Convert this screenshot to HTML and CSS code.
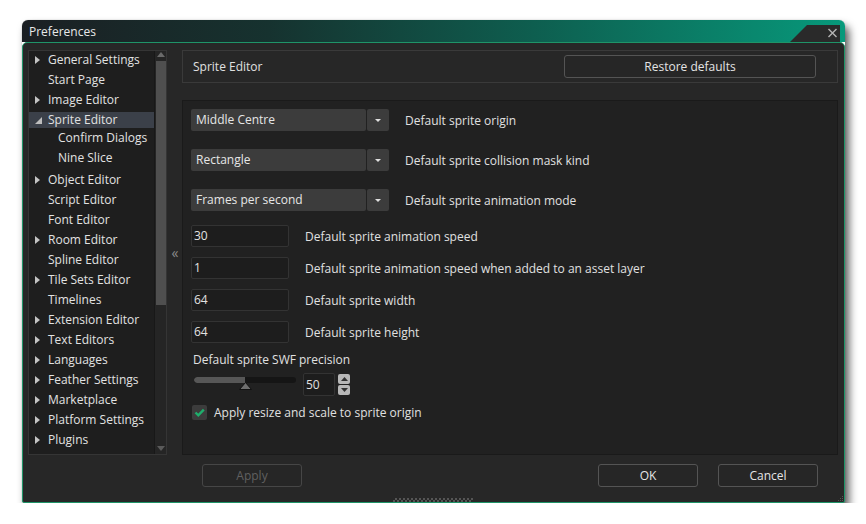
FILE: index.html
```html
<!DOCTYPE html>
<html>
<head>
<meta charset="utf-8">
<link rel="stylesheet" href="styles.css">
</head>
<body>
<div class="window">
  <div class="titlebar">
    <span class="title">Preferences</span>
    <svg class="close-tab" width="55" height="22" viewBox="0 0 55 22">
      <polygon points="0,22 17,5 50,5 50,22" fill="#2a2a2a"/>
      <path d="M38.5 9 L46.5 17 M46.5 9 L38.5 17" stroke="#b4b4b4" stroke-width="1.4" fill="none"/>
    </svg>
  </div>
  <div class="body">
    <div class="main">
      <div class="sidebar">
        <div class="tree">
          <div class="row"><span class="tri"></span>General Settings</div>
          <div class="row leaf">Start Page</div>
          <div class="row"><span class="tri"></span>Image Editor</div>
          <div class="row selected"><span class="tri-open"></span>Sprite Editor</div>
          <div class="row sub">Confirm Dialogs</div>
          <div class="row sub">Nine Slice</div>
          <div class="row after-sub"><span class="tri"></span>Object Editor</div>
          <div class="row leaf">Script Editor</div>
          <div class="row leaf">Font Editor</div>
          <div class="row"><span class="tri"></span>Room Editor</div>
          <div class="row leaf">Spline Editor</div>
          <div class="row"><span class="tri"></span>Tile Sets Editor</div>
          <div class="row leaf">Timelines</div>
          <div class="row"><span class="tri"></span>Extension Editor</div>
          <div class="row"><span class="tri"></span>Text Editors</div>
          <div class="row"><span class="tri"></span>Languages</div>
          <div class="row"><span class="tri"></span>Feather Settings</div>
          <div class="row"><span class="tri"></span>Marketplace</div>
          <div class="row"><span class="tri"></span>Platform Settings</div>
          <div class="row"><span class="tri"></span>Plugins</div>
          <div class="row"><span class="tri"></span>Runtime Feeds</div>
        </div>
        <div class="scrollbar">
          <span class="sb-up"></span>
          <div class="sb-thumb"></div>
          <span class="sb-down"></span>
        </div>
      </div>
      <div class="collapse">«</div>
      <div class="right">
        <div class="header">
          <span>Sprite Editor</span>
          <div class="btn restore">Restore defaults</div>
        </div>
        <div class="panel">
          <div class="drow">
            <div class="dropdown"><div class="dd-main">Middle Centre</div><div class="dd-arrow"><span></span></div></div>
            <span class="dlabel">Default sprite origin</span>
          </div>
          <div class="drow">
            <div class="dropdown"><div class="dd-main">Rectangle</div><div class="dd-arrow"><span></span></div></div>
            <span class="dlabel">Default sprite collision mask kind</span>
          </div>
          <div class="drow last">
            <div class="dropdown"><div class="dd-main">Frames per second</div><div class="dd-arrow"><span></span></div></div>
            <span class="dlabel">Default sprite animation mode</span>
          </div>
          <div class="irow"><div class="input">30</div><span class="ilabel">Default sprite animation speed</span></div>
          <div class="irow"><div class="input">1</div><span class="ilabel">Default sprite animation speed when added to an asset layer</span></div>
          <div class="irow"><div class="input">64</div><span class="ilabel">Default sprite width</span></div>
          <div class="irow"><div class="input">64</div><span class="ilabel">Default sprite height</span></div>
          <div class="swf-label">Default sprite SWF precision</div>
          <div class="slider-row">
            <div class="slider">
              <div class="track"><div class="fill"></div></div>
              <svg class="knob" width="13" height="8" viewBox="0 0 13 8"><polygon points="6.5,0.5 12.5,7.5 0.5,7.5" fill="#6e6e6e" stroke="#111" stroke-width="1"/></svg>
            </div>
            <div class="spin-input">50</div>
            <div class="spin-btns">
              <div class="spin-btn"><svg width="7" height="4" viewBox="0 0 7 4"><polygon points="3.5,0 7,4 0,4" fill="#333"/></svg></div>
              <div class="spin-btn"><svg width="7" height="4" viewBox="0 0 7 4"><polygon points="0,0 7,0 3.5,4" fill="#333"/></svg></div>
            </div>
          </div>
          <div class="check-row">
            <div class="checkbox"><svg width="15" height="15" viewBox="0 0 15 15"><path d="M3.5 7.5 L6.3 10.3 L11.8 4.6" stroke="#1fae6c" stroke-width="2.4" fill="none"/></svg></div>
            <span class="clabel">Apply resize and scale to sprite origin</span>
          </div>
        </div>
      </div>
    </div>
    <div class="footer">
      <div class="btn disabled">Apply</div>
      <div class="btn ok">OK</div>
      <div class="btn">Cancel</div>
    </div>
    <div class="grip"></div>
    <svg class="corner-grip" width="7" height="7" viewBox="0 0 7 7">
      <rect x="5" y="1" width="1" height="1" fill="#555"/>
      <rect x="3" y="3" width="1" height="1" fill="#555"/>
      <rect x="5" y="3" width="1" height="1" fill="#555"/>
      <rect x="1" y="5" width="1" height="1" fill="#555"/>
      <rect x="3" y="5" width="1" height="1" fill="#555"/>
      <rect x="5" y="5" width="1" height="1" fill="#555"/>
    </svg>
  </div>
</div>
</body>
</html>
```
FILE: styles.css
```css
* { box-sizing: border-box; }
html, body { margin: 0; padding: 0; }
body {
  background: #ffffff;
  font-family: "Open Sans", "DejaVu Sans", sans-serif;
  font-size: 12px;
  color: #e0e0e0;
}
.window {
  width: 823px;
  margin: 20px 0 0 22px;
  border-radius: 6px 6px 3px 3px;
  box-shadow: 4px 6px 8px rgba(0, 0, 0, 0.65), 0 0 1px rgba(0, 0, 0, 0.4);
}
.titlebar {
  position: relative;
  height: 22px;
  line-height: 23px;
  padding-left: 7px;
  border-radius: 6px 6px 0 0;
  background: linear-gradient(to right, #1b1f23 0%, #16322f 30%, #0e5e4f 62%, #07997b 100%);
  color: #e8e8e8;
}
.close-tab {
  position: absolute;
  right: 0;
  top: 0;
}
.body {
  position: relative;
  background: #272727;
  border: 1px solid #1f9468;
  border-radius: 5px 5px 2px 2px;
  padding: 7px 6px 15px 5px;
}
.main {
  display: grid;
  grid-template-columns: 139px 15px 1fr;
  height: 405px;
}
.sidebar {
  display: flex;
  background: #1e1e1e;
  border: 1px solid #353535;
  overflow: hidden;
}
.tree {
  flex: 1;
  overflow: hidden;
  margin-top: -1px;
}
.row {
  height: 20px;
  line-height: 20px;
  padding-left: 6px;
  white-space: nowrap;
  display: flex;
  align-items: center;
  color: #e2e2e2;
}
.row.leaf { padding-left: 19px; }
.row.sub { padding-left: 29px; padding-bottom: 5px; }
.row.selected {
  height: 16px;
  line-height: 16px;
  margin: 2px 0;
  background: #3b4049;
}
.tri {
  width: 0;
  height: 0;
  border-left: 5px solid #c4c4c4;
  border-top: 4px solid transparent;
  border-bottom: 4px solid transparent;
  margin-right: 8px;
}
.tri-open {
  width: 0;
  height: 0;
  border-right: 7px solid #bdbdbd;
  border-top: 7px solid transparent;
  margin-right: 6px;
  margin-top: 1px;
}
.scrollbar {
  width: 12px;
  background: #252525;
  border-left: 1px solid #181818;
  display: flex;
  flex-direction: column;
  align-items: center;
}
.sb-up {
  margin-top: 1px;
  width: 0;
  height: 0;
  border-left: 4px solid transparent;
  border-right: 4px solid transparent;
  border-bottom: 5px solid #6a6a6a;
}
.sb-thumb {
  margin-top: 4px;
  width: 10px;
  height: 244px;
  background: #4f4f4f;
}
.sb-down {
  margin-top: auto;
  margin-bottom: 3px;
  width: 0;
  height: 0;
  border-left: 4px solid transparent;
  border-right: 4px solid transparent;
  border-top: 5px solid #5a5a5a;
}
.collapse {
  display: flex;
  align-items: center;
  justify-content: center;
  color: #8c8c8c;
  font-size: 14px;
  padding-left: 1px;
}
.right {
  display: flex;
  flex-direction: column;
  gap: 17px;
}
.header {
  height: 33px;
  border: 1px solid #3a3a3a;
  display: flex;
  align-items: center;
  justify-content: space-between;
  padding: 0 21px 0 10px;
}
.btn {
  width: 100px;
  height: 23px;
  border: 1px solid #545454;
  border-radius: 3px;
  background: #262626;
  display: flex;
  align-items: center;
  justify-content: center;
  color: #e4e4e4;
}
.btn.restore { width: 252px; }
.btn.disabled { color: #606060; border-color: #464646; }
.panel {
  flex: 1;
  background: #212121;
  border: 1px solid #1a1a1a;
  padding: 8px 8px;
}
.drow {
  display: flex;
  align-items: center;
  margin-bottom: 18px;
}
.drow.last { margin-bottom: 14px; }
.dropdown {
  display: flex;
  gap: 1px;
  height: 22px;
}
.dd-main {
  width: 175px;
  background: #3c3c3c;
  border-radius: 2px;
  padding-left: 5px;
  line-height: 22px;
  color: #e6e6e6;
}
.dd-arrow {
  width: 22px;
  background: #3c3c3c;
  border-radius: 2px;
  display: flex;
  align-items: center;
  justify-content: center;
}
.dd-arrow span {
  width: 0;
  height: 0;
  border-left: 3.5px solid transparent;
  border-right: 3.5px solid transparent;
  border-top: 3px solid #e0e0e0;
}
.dlabel { margin-left: 16px; }
.irow {
  display: flex;
  align-items: center;
  margin-bottom: 10px;
}
.input {
  width: 98px;
  height: 22px;
  background: #1d1d1d;
  border: 1px solid #333333;
  border-radius: 2px;
  padding-left: 2px;
  line-height: 20px;
  color: #e2e2e2;
}
.ilabel { margin-left: 16px; }
.swf-label {
  margin-top: -1px;
  padding-left: 2px;
  line-height: 16px;
}
.slider-row {
  display: flex;
  align-items: flex-start;
  margin-top: 5px;
  height: 23px;
}
.slider {
  position: relative;
  width: 102px;
  height: 17px;
  margin-left: 3px;
  margin-top: 4px;
}
.track {
  height: 6px;
  background: #151515;
  border-radius: 3px;
  overflow: hidden;
}
.fill {
  width: 51px;
  height: 6px;
  background: #575757;
  border-radius: 3px 0 0 3px;
}
.knob {
  position: absolute;
  left: 45px;
  top: 5px;
}
.spin-input {
  margin-left: 7px;
  width: 32px;
  height: 23px;
  background: #1d1d1d;
  border: 1px solid #333333;
  border-radius: 2px;
  padding-left: 2px;
  line-height: 21px;
}
.spin-btns {
  margin-left: 3px;
  margin-top: 1px;
  display: flex;
  flex-direction: column;
  gap: 1px;
}
.spin-btn {
  width: 12px;
  height: 10px;
  background: #b8b8b8;
  border-radius: 2px;
  display: flex;
  align-items: center;
  justify-content: center;
}
.check-row {
  display: flex;
  align-items: center;
  margin-top: 8px;
}
.checkbox {
  width: 15px;
  height: 15px;
  margin-left: 1px;
  background: #3c3c3c;
  border-radius: 2px;
}
.checkbox svg { display: block; }
.clabel { margin-left: 7px; }
.footer {
  display: flex;
  margin-top: 9px;
  margin-left: 174px;
  padding-right: 20px;
  gap: 20px;
}
.btn.ok { margin-left: auto; }
.grip {
  position: absolute;
  left: 370px;
  bottom: 0;
  width: 80px;
  height: 4px;
  background-image: conic-gradient(#555 25%, transparent 0 50%, #555 0 75%, transparent 0);
  background-size: 4px 4px;
}
.corner-grip {
  position: absolute;
  right: 0;
  bottom: 0;
}
```
